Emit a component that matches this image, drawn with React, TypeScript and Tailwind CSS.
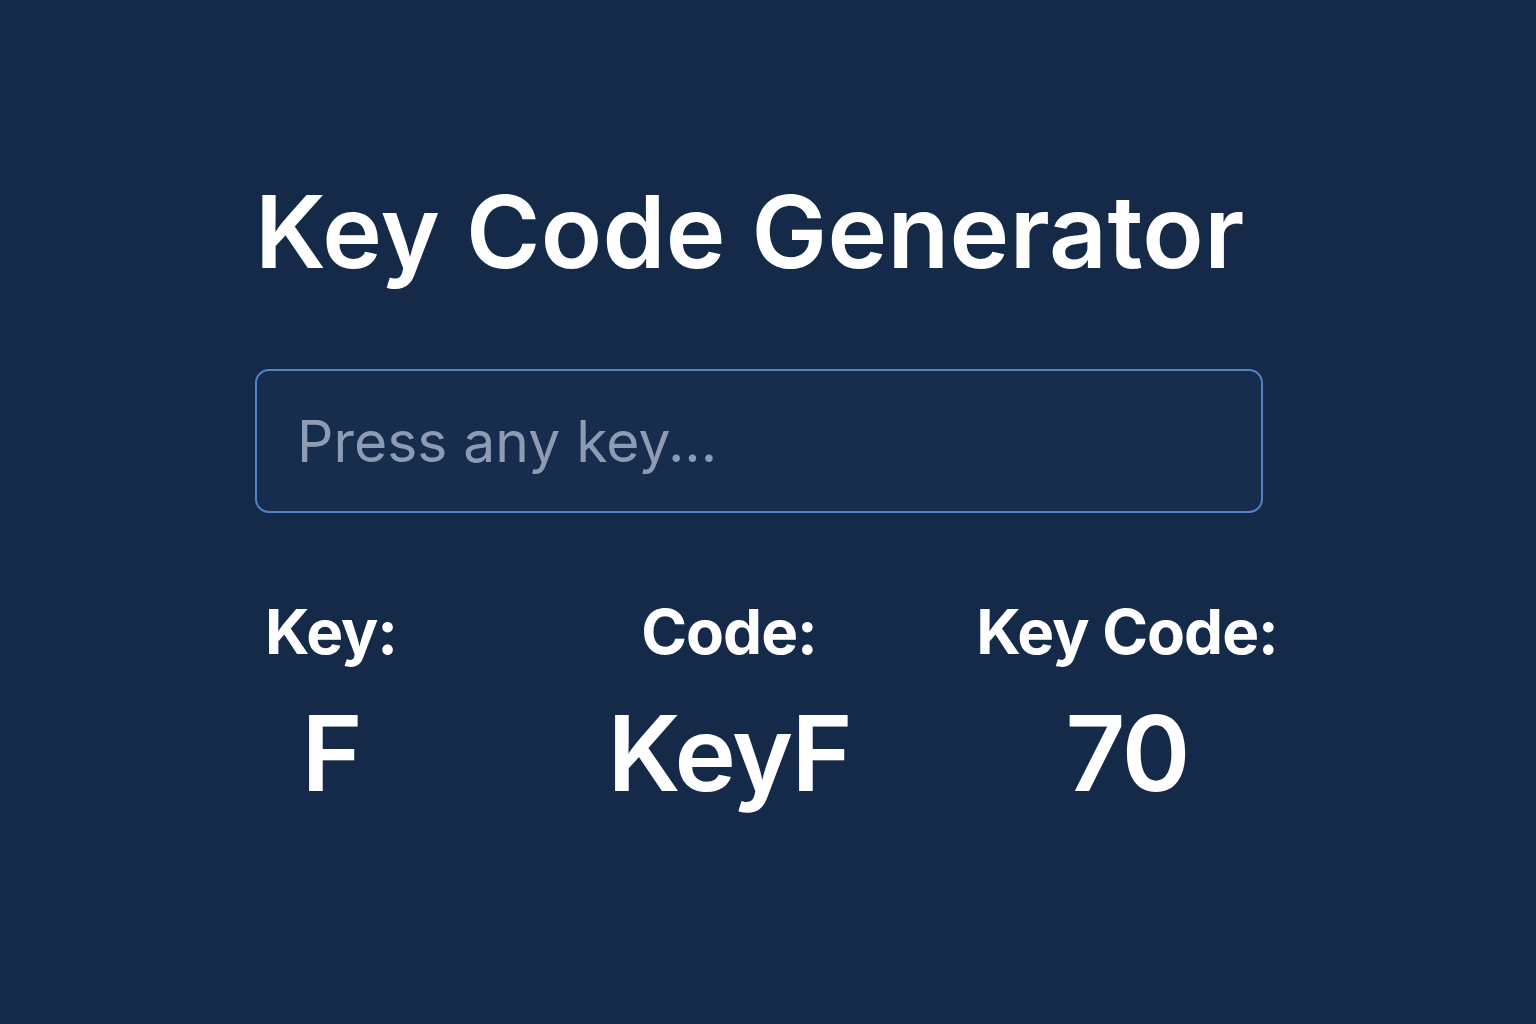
import { useState } from "react";

export default function App() {
  const [info, setInfo] = useState({ key: "F", code: "KeyF", keyCode: 70 });

  return (
    <div className="min-h-screen w-full bg-[#142a48] font-['Inter','Noto_Sans',sans-serif] text-white">
      <div className="pt-[181px] pl-[255px]">
        {/* 标题 */}
        <h1 className="text-[101px] leading-none font-semibold tracking-[0.3px]">Key Code Generator</h1>

        {/* 输入框 */}
        <input
          className="mt-[87px] block w-[1008px] h-[144px] rounded-[14px] border-2 border-[#5283c4] bg-[#172d4d] px-[40px] text-[57px] text-white placeholder:text-[#8d9cb2] outline-none"
          placeholder="Press any key..."
          onKeyDown={(e) => {
            e.preventDefault();
            setInfo({ key: e.key, code: e.code, keyCode: e.keyCode });
          }}
        />
      </div>

      {/* 结果 */}
      <div className="mt-[88px] ml-[132px] grid w-[1194px] grid-cols-3">
        <Item label="Key:" value={info.key} />
        <Item label="Code:" value={info.code} />
        <Item label="Key Code:" value={String(info.keyCode)} />
      </div>
    </div>
  );
}

function Item({ label, value }: { label: string; value: string }) {
  return (
    <div className="flex flex-col items-center">
      <div className="text-[62px] leading-none font-bold tracking-[-1px]">{label}</div>
      <div className="mt-[38px] text-[104px] leading-none font-semibold tracking-[-2px]">{value}</div>
    </div>
  );
}
